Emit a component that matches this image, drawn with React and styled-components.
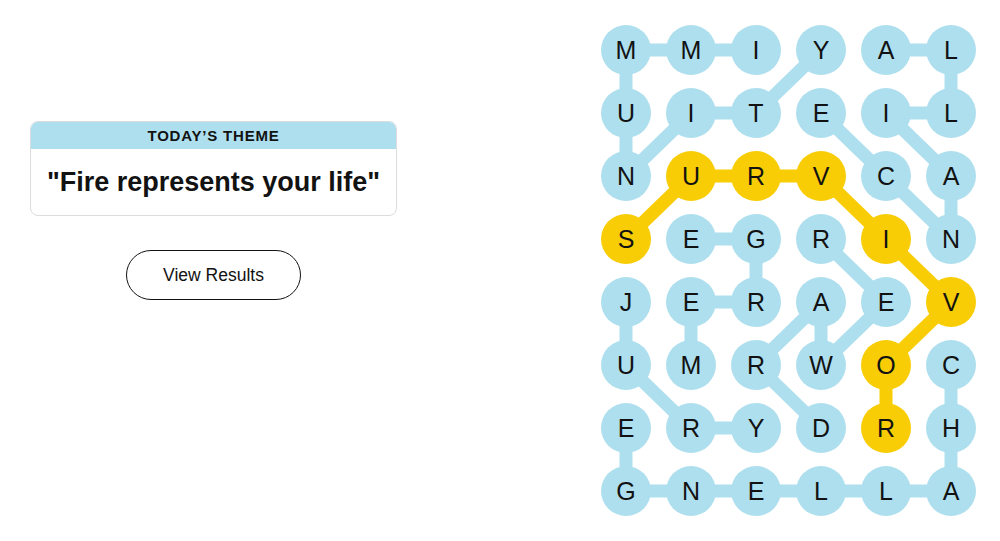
import React from "react";
import styled, { createGlobalStyle } from "styled-components";

const GlobalStyle = createGlobalStyle`
  html, body { margin: 0; padding: 0; background: #ffffff; }
  body { font-family: "Liberation Sans", Arial, sans-serif; color: #121212; }
`;

const BLUE = "#aedfee";
const YELLOW = "#f8cd05";

const ROWS = [
  "MMIYAL",
  "UITEIL",
  "NURVCA",
  "SEGRIN",
  "JERAEV",
  "UMRWOC",
  "ERYDRH",
  "GNELLA",
];

const WORDS = [
  { path: [[0,2],[0,1],[0,0],[1,0],[2,0],[1,1],[1,2],[0,3]], spangram: false },
  { path: [[0,4],[0,5],[1,5],[1,4],[2,5],[3,5],[2,4],[1,3]], spangram: false },
  { path: [[5,1],[4,1],[4,2],[3,2],[3,1]], spangram: false },
  { path: [[4,0],[5,0],[6,1],[6,2]], spangram: false },
  { path: [[5,5],[6,5],[7,5],[7,4],[7,3],[7,2],[7,1],[7,0],[6,0]], spangram: false },
  { path: [[3,3],[4,4],[5,3],[4,3],[5,2],[6,3]], spangram: false },
  { path: [[3,0],[2,1],[2,2],[2,3],[3,4],[4,5],[5,4],[6,4]], spangram: true },
];

const spangramCells = new Set(
  WORDS.filter((w) => w.spangram).flatMap((w) => w.path.map(([r, c]) => `${r}-${c}`))
);

const CELL = 50;
const COL_GAP = 15;
const ROW_GAP = 13;
const cx = (c) => CELL / 2 + c * (CELL + COL_GAP);
const cy = (r) => CELL / 2 + r * (CELL + ROW_GAP);

const Page = styled.div`
  display: flex;
  width: 1000px;
  height: 541px;
  box-sizing: border-box;
  overflow: hidden;
`;

const Side = styled.section`
  width: 367px;
  margin-left: 30px;
  padding-top: 121px;
  display: flex;
  flex-direction: column;
  align-items: center;
`;

const ThemeCard = styled.div`
  width: 100%;
  box-sizing: border-box;
  border: 1px solid #dcdcdc;
  border-radius: 8px;
  overflow: hidden;
  background: #fff;
`;

const ThemeHeader = styled.div`
  height: 27px;
  background: ${BLUE};
  display: flex;
  align-items: center;
  justify-content: center;
  font-size: 15px;
  font-weight: 700;
  letter-spacing: 0.8px;
  text-transform: uppercase;
  color: #121212;
`;

const ThemeTitle = styled.div`
  height: 66px;
  display: flex;
  align-items: center;
  justify-content: center;
  font-size: 27px;
  font-weight: 700;
  letter-spacing: 0;
  color: #121212;
`;

const ResultsButton = styled.button`
  margin-top: 34px;
  width: 175px;
  height: 50px;
  border: 1px solid #121212;
  border-radius: 25px;
  background: #fff;
  font-family: "Liberation Sans", Arial, sans-serif;
  font-size: 17.5px;
  color: #121212;
  cursor: pointer;
`;

const BoardWrap = styled.section`
  margin-left: auto;
  margin-right: 24px;
  padding-top: 25px;
`;

const Board = styled.div`
  position: relative;
  display: grid;
  grid-template-columns: repeat(6, ${CELL}px);
  grid-auto-rows: ${CELL}px;
  column-gap: ${COL_GAP}px;
  row-gap: ${ROW_GAP}px;
`;

const Links = styled.svg`
  position: absolute;
  left: 0;
  top: 0;
  pointer-events: none;
`;

const Letter = styled.div`
  position: relative;
  width: ${CELL}px;
  height: ${CELL}px;
  border-radius: 50%;
  background: ${(p) => (p.$spangram ? YELLOW : BLUE)};
  display: flex;
  align-items: center;
  justify-content: center;
  font-family: "Liberation Sans", Arial, sans-serif;
  font-size: 25px;
  color: #121212;
`;

export default function App() {
  const w = 6 * CELL + 5 * COL_GAP;
  const h = 8 * CELL + 7 * ROW_GAP;
  return (
    <>
      <GlobalStyle />
      <Page>
        <Side>
          <ThemeCard>
            <ThemeHeader>Today’s Theme</ThemeHeader>
            <ThemeTitle>"Fire represents your life"</ThemeTitle>
          </ThemeCard>
          <ResultsButton>View Results</ResultsButton>
        </Side>
        <BoardWrap>
          <Board>
            <Links width={w} height={h} viewBox={`0 0 ${w} ${h}`}>
              {WORDS.map((word, i) =>
                word.path.slice(1).map(([r, c], j) => {
                  const [pr, pc] = word.path[j];
                  return (
                    <line
                      key={`${i}-${j}`}
                      x1={cx(pc)}
                      y1={cy(pr)}
                      x2={cx(c)}
                      y2={cy(r)}
                      stroke={word.spangram ? YELLOW : BLUE}
                      strokeWidth={13}
                    />
                  );
                })
              )}
            </Links>
            {ROWS.map((row, r) =>
              row.split("").map((ch, c) => (
                <Letter key={`${r}-${c}`} $spangram={spangramCells.has(`${r}-${c}`)}>
                  {ch}
                </Letter>
              ))
            )}
          </Board>
        </BoardWrap>
      </Page>
    </>
  );
}
